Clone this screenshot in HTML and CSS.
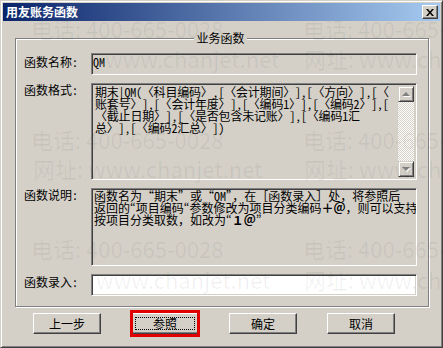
FILE: index.html
```html
<!DOCTYPE html>
<html lang="zh-CN">
<head>
    <meta charset="UTF-8">
    <meta name="viewport" content="width=device-width, initial-scale=1.0">
    <title>用友账务函数</title>
    <link rel="stylesheet" href="styles.css">
</head>
<body>
    <div class="window">
        <div class="titlebar">
            <span class="title">用友账务函数</span>
            <button class="close" aria-label="关闭">
                <svg width="8" height="7" viewBox="0 0 8 7"><path d="M0 0h2l2 2.5L6 0h2L5 3.5 8 7H6L4 4.5 2 7H0l3-3.5z" fill="#000"/></svg>
            </button>
        </div>

        <fieldset class="group">
            <legend>业务函数</legend>

            <label class="label label-name">函数名称:</label>
            <div class="field readonly field-name">QM</div>

            <label class="label label-format">函数格式:</label>
            <div class="field readonly memo">
                <div class="memo-text">期末|QM(〈科目编码〉,[〈会计期间〉],[〈方向〉],[〈<br>账套号〉],[〈会计年度〉],[〈编码1〉],[〈编码2〉],[<br>〈截止日期〉],[〈是否包含未记账〉],[〈编码1汇<br>总〉],[〈编码2汇总〉])</div>
                <div class="scrollbar">
                    <span class="arrow"><i class="tri up"></i></span>
                    <span class="track"></span>
                    <span class="arrow"><i class="tri down"></i></span>
                </div>
            </div>

            <label class="label label-desc">函数说明:</label>
            <div class="field readonly desc">函数名为<q>“</q>期末<q>”</q>或<q>“</q><span class="hw">QM</span><q>”</q>，在［函数录入］处，将参照后<br>返回的<span class="pw">“</span>项目编码<span class="pw">“</span>参数修改为项目分类编码<b>＋＠</b>，则可以支持<br>按项目分类取数，如改为<span class="pw">“</span><b>１＠</b><span class="pw">”</span></div>

            <label class="label label-entry">函数录入:</label>
            <div class="field entry"></div>
        </fieldset>

        <div class="buttons">
            <button class="btn">上一步</button>
            <button class="btn btn-ref">参照</button>
            <button class="btn">确定</button>
            <button class="btn">取消</button>
        </div>

        <!-- watermark stamped over the screenshot -->
        <div class="watermark">
            <span style="left:30px; top:14px">电话: 400-665-0028</span>
            <span style="left:302px; top:14px">电话: 400-665-0028</span>
            <span style="left:104px; top:44px">www.chanjet.net</span>
            <span style="left:303px; top:44px">网址: www.chanjet.net</span>
            <span style="left:30px; top:125px">电话: 400-665-0028</span>
            <span style="left:302px; top:125px">电话: 400-665-0028</span>
            <span style="left:32px; top:154px">网址: www.chanjet.net</span>
            <span style="left:303px; top:154px">网址: www.chanjet.net</span>
            <span style="left:30px; top:234px">电话: 400-665-0028</span>
            <span style="left:302px; top:234px">电话: 400-665-0028</span>
            <span style="left:95px; top:265px">www.chanjet.net</span>
            <span style="left:303px; top:265px">网址: www.chanjet.net</span>
        </div>
    </div>
</body>
</html>
```

FILE: styles.css
```css
* {
    box-sizing: border-box;
}

body {
    margin: 0;
    font-family: "Noto Sans CJK SC", "Noto Sans", sans-serif;
    font-size: 12px;
    line-height: 12px;
    color: #000;
    background: #d4d0c8;
}

.window {
    position: relative;
    width: 443px;
    height: 348px;
    overflow: hidden;
    display: flex;
    flex-direction: column;
    padding: 2px;
    background: #d4d0c8;
    border: 1px solid;
    border-color: #d4d0c8 #404040 #404040 #d4d0c8;
    box-shadow: inset 1px 1px 0 #fff, inset -1px -1px 0 #808080;
}

.titlebar {
    position: relative;
    z-index: 2;
    height: 18px;
    display: flex;
    align-items: center;
    justify-content: space-between;
    padding: 0 2px 0 3px;
    background: linear-gradient(to right, #0a246a, #a6caf0);
    color: #fff;
    font-weight: bold;
}

.close {
    width: 16px;
    height: 14px;
    padding: 0;
    display: flex;
    align-items: center;
    justify-content: center;
    background: #d4d0c8;
    border: 1px solid;
    border-color: #fff #404040 #404040 #fff;
    box-shadow: inset -1px -1px 0 #808080, inset 1px 1px 0 #d4d0c8;
}

/* group box */
.group {
    margin: 10px 11px 0 12px;
    padding: 8px 11px 10px 8px;
    min-width: 0;
    display: grid;
    grid-template-columns: 67px 1fr;
    grid-template-rows: 22px 97px 78px 22px;
    row-gap: 8px;
    border: 1px solid #808080;
    box-shadow: 1px 1px 0 #fff, inset 1px 1px 0 #fff;
}

.group legend {
    margin: 0 auto;
    padding: 0 2px;
    line-height: 14px;
    background: #d4d0c8;
}

/* half-width latin, like the old bitmap dialog font */
.label,
.field-name,
.memo-text,
.hw {
    font-feature-settings: "hwid";
}

.pw {
    font-feature-settings: "pwid";
}

.label {
    padding-top: 3px;
}

.label-format,
.label-desc {
    padding-top: 1px;
}

.label-entry {
    padding-top: 2px;
}

.field {
    border: 1px solid;
    border-color: #808080 #fff #fff #808080;
    box-shadow: inset 1px 1px 0 #404040, inset -1px -1px 0 #d4d0c8;
    background: #fff;
}

.field.readonly {
    background: #d4d0c8;
}

.field-name {
    padding: 2px 1px;
}

.memo {
    display: flex;
    padding: 2px;
}

.memo-text {
    flex: 1;
    padding: 0 1px;
    letter-spacing: -0.2px;
    white-space: nowrap;
    overflow: hidden;
}

.scrollbar {
    width: 16px;
    display: flex;
    flex-direction: column;
}

.arrow {
    height: 16px;
    display: flex;
    align-items: center;
    justify-content: center;
    background: #d4d0c8;
    border: 1px solid;
    border-color: #d4d0c8 #404040 #404040 #d4d0c8;
    box-shadow: inset 1px 1px 0 #fff, inset -1px -1px 0 #808080;
}

.tri {
    width: 0;
    height: 0;
    border-left: 4px solid transparent;
    border-right: 4px solid transparent;
    filter: drop-shadow(1px 1px 0 #fff);
}

.tri.up {
    border-bottom: 4px solid #808080;
}

.tri.down {
    border-top: 4px solid #808080;
}

.track {
    flex: 1;
    background-color: #d4d0c8;
    background-image: conic-gradient(#fff 25%, #d4d0c8 0 50%, #fff 0 75%, #d4d0c8 0);
    background-size: 2px 2px;
}

.desc {
    padding: 1px 2px;
    white-space: nowrap;
    overflow: hidden;
}

.desc q {
    quotes: none;
    font-feature-settings: "fwid";
}

/* buttons */
.buttons {
    display: flex;
    gap: 30px;
    margin-top: 6px;
    padding-left: 30px;
}

.btn {
    position: relative;
    width: 68px;
    height: 21px;
    padding: 0;
    font: inherit;
    color: #000;
    background: #d4d0c8;
    border: 1px solid;
    border-color: #fff #404040 #404040 #fff;
    box-shadow: inset -1px -1px 0 #808080, inset 1px 1px 0 #d4d0c8;
}

.btn-ref::before {
    content: "";
    position: absolute;
    inset: 3px;
    border: 1px dotted #000;
}

.btn-ref::after {
    content: "";
    position: absolute;
    top: -4px;
    left: -2px;
    right: -2px;
    bottom: -4px;
    border: 3px solid #e00000;
}

/* watermark */
.watermark {
    position: absolute;
    inset: 0;
    z-index: 1;
    pointer-events: none;
}

.watermark span {
    position: absolute;
    white-space: nowrap;
    font-size: 22px;
    line-height: 26px;
    color: rgba(0, 0, 0, 0.06);
}
```
